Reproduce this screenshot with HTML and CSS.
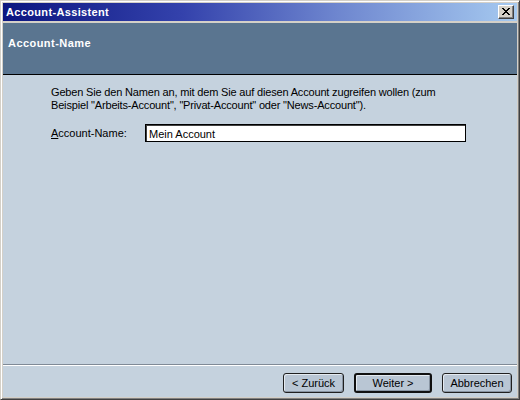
FILE: index.html
```html
<!DOCTYPE html>
<html>
<head>
<meta charset="utf-8">
<link rel="stylesheet" href="styles.css">
</head>
<body>
<div class="window">
  <div class="titlebar">
    <span class="title">Account-Assistent</span>
    <span class="close"><svg width="10" height="9" viewBox="0 0 10 9"><path d="M1 1 L8 8 M2 1 L9 8 M8 1 L1 8 M9 1 L2 8" stroke="#000" stroke-width="1" fill="none" shape-rendering="crispEdges"/></svg></span>
  </div>
  <div class="header">Account-Name</div>
  <div class="content">
    <p class="intro">Geben Sie den Namen an, mit dem Sie auf diesen Account zugreifen wollen (zum Beispiel "Arbeits-Account", "Privat-Account" oder "News-Account").</p>
    <div class="row">
      <label class="label"><u>A</u>ccount-Name:</label>
      <input class="field" type="text" value="Mein Account">
    </div>
  </div>
  <div class="footer">
    <button class="btn back">&lt; Zurück</button>
    <button class="btn next">Weiter &gt;</button>
    <button class="btn cancel">Abbrechen</button>
  </div>
</div>
</body>
</html>
```
FILE: styles.css
```css
html, body {
  margin: 0;
  padding: 0;
}
body {
  width: 520px;
  height: 400px;
  overflow: hidden;
  font-family: "Liberation Sans", Arial, sans-serif;
  font-size: 11px;
}
.window {
  box-sizing: border-box;
  width: 520px;
  height: 400px;
  display: flex;
  flex-direction: column;
  background: #d4d0c8;
  border-top: 1px solid #d4d0c8;
  border-left: 1px solid #d4d0c8;
  border-right: 1px solid #404040;
  border-bottom: 1px solid #404040;
  box-shadow: inset 1px 1px 0 #ffffff, inset -1px -1px 0 #808080;
  padding: 2px 2px 2px 2px;
}
.titlebar {
  height: 18px;
  flex: none;
  display: flex;
  align-items: center;
  justify-content: space-between;
  background: linear-gradient(to right, #0c1680, #3442ac 35%, #6e86cf 65%, #a6caf0);
  padding: 0 3px 0 3px;
}
.title {
  color: #fff;
  font-weight: bold;
  font-size: 11px;
  letter-spacing: 0.35px;
}
.close {
  width: 16px;
  height: 14px;
  box-sizing: border-box;
  background: #d4d0c8;
  border-top: 1px solid #fff;
  border-left: 1px solid #fff;
  border-right: 1px solid #404040;
  border-bottom: 1px solid #404040;
  box-shadow: inset -1px -1px 0 #808080;
  display: flex;
  align-items: center;
  justify-content: center;
}
.close svg {
  display: block;
  margin: 0 1px 1px 0;
}
.header {
  flex: none;
  margin-top: 2px;
  height: 52px;
  box-sizing: border-box;
  background: #5a7590;
  color: #fff;
  font-weight: bold;
  font-size: 11px;
  letter-spacing: 0.45px;
  padding: 14px 0 0 5px;
  border-bottom: 1px solid #000;
}
.content {
  flex: 1;
  background: #c5d2de;
  padding: 11px 30px 0 48px;
}
.intro {
  margin: 0;
  max-width: 392px;
  line-height: 13px;
  color: #000;
  letter-spacing: -0.17px;
}
.row {
  display: flex;
  align-items: center;
  margin-top: 12px;
}
.label {
  width: 94px;
  flex: none;
  color: #000;
}
.field {
  width: 321px;
  height: 18px;
  box-sizing: border-box;
  margin: 0;
  border: 1px solid #000;
  box-shadow: inset 1px 1px 0 #404040;
  background: #fff;
  font-family: "Liberation Sans", Arial, sans-serif;
  font-size: 11px;
  padding: 1px 3px 0 3px;
  color: #000;
  outline: none;
}
.footer {
  flex: none;
  height: 33px;
  box-sizing: border-box;
  background: #c5d2de;
  border-top: 1px solid #808a96;
  box-shadow: inset 0 1px 0 #ffffff;
  display: flex;
  justify-content: flex-end;
  align-items: flex-start;
  padding: 8px 5px 0 0;
  gap: 10px;
}
.btn {
  height: 20px;
  box-sizing: border-box;
  margin: 0;
  border: 1px solid #202020;
  border-radius: 3px;
  background: #b9c6d4;
  box-shadow: inset 1px 1px 0 #e4eaf0, inset -1px -1px 0 #8894a2;
  font-family: "Liberation Sans", Arial, sans-serif;
  font-size: 11px;
  color: #000;
  padding: 0;
}
.back { width: 61px; }
.next {
  width: 78px;
  border: 2px solid #101010;
}
.cancel { width: 70px; }
```
